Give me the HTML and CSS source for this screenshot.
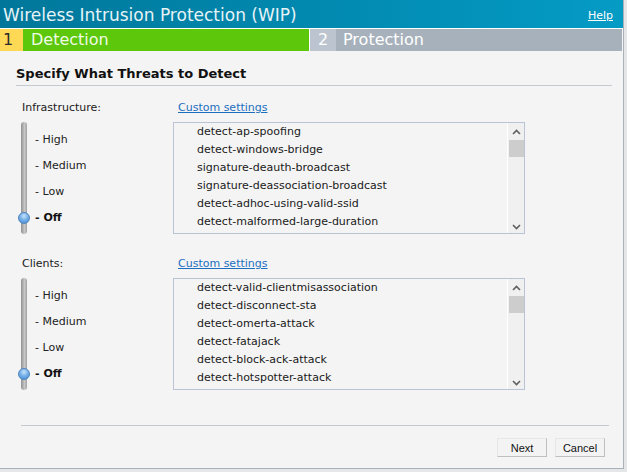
FILE: index.html
```html
<!DOCTYPE html>
<html>
<head>
<meta charset="utf-8">
<link rel="stylesheet" href="styles.css">
</head>
<body>
<div class="dialog">
  <div class="titlebar">
    <span class="title">Wireless Intrusion Protection (WIP)</span>
    <a class="help" href="#">Help</a>
  </div>
  <div class="steps">
    <div class="num num-active">1</div>
    <div class="step step-active">Detection</div>
    <div class="num num-next">2</div>
    <div class="step step-next">Protection</div>
  </div>
  <div class="content">
    <h1 class="heading">Specify What Threats to Detect</h1>

    <div class="section">
      <div class="sec-label">Infrastructure:</div>
      <a class="custom" href="#">Custom settings</a>
      <div class="slider">
        <div class="track"><div class="knob"></div></div>
        <div class="levels">
          <div>- High</div>
          <div>- Medium</div>
          <div>- Low</div>
          <div class="sel">- Off</div>
        </div>
      </div>
      <div class="listbox">
        <div class="items">
          <div class="item">detect-ap-spoofing</div>
          <div class="item">detect-windows-bridge</div>
          <div class="item">signature-deauth-broadcast</div>
          <div class="item">signature-deassociation-broadcast</div>
          <div class="item">detect-adhoc-using-valid-ssid</div>
          <div class="item">detect-malformed-large-duration</div>
        </div>
        <div class="scrollbar">
          <svg class="arrow up" width="9" height="6" viewBox="0 0 9 6"><path d="M1 5 L4.5 1.5 L8 5" fill="none" stroke="#5f5f5f" stroke-width="1.6"/></svg>
          <div class="thumb"></div>
          <svg class="arrow down" width="9" height="6" viewBox="0 0 9 6"><path d="M1 1 L4.5 4.5 L8 1" fill="none" stroke="#5f5f5f" stroke-width="1.6"/></svg>
        </div>
      </div>
    </div>

    <div class="section section2">
      <div class="sec-label">Clients:</div>
      <a class="custom" href="#">Custom settings</a>
      <div class="slider">
        <div class="track"><div class="knob"></div></div>
        <div class="levels">
          <div>- High</div>
          <div>- Medium</div>
          <div>- Low</div>
          <div class="sel">- Off</div>
        </div>
      </div>
      <div class="listbox">
        <div class="items">
          <div class="item">detect-valid-clientmisassociation</div>
          <div class="item">detect-disconnect-sta</div>
          <div class="item">detect-omerta-attack</div>
          <div class="item">detect-fatajack</div>
          <div class="item">detect-block-ack-attack</div>
          <div class="item">detect-hotspotter-attack</div>
        </div>
        <div class="scrollbar">
          <svg class="arrow up" width="9" height="6" viewBox="0 0 9 6"><path d="M1 5 L4.5 1.5 L8 5" fill="none" stroke="#5f5f5f" stroke-width="1.6"/></svg>
          <div class="thumb"></div>
          <svg class="arrow down" width="9" height="6" viewBox="0 0 9 6"><path d="M1 1 L4.5 4.5 L8 1" fill="none" stroke="#5f5f5f" stroke-width="1.6"/></svg>
        </div>
      </div>
    </div>

    <div class="footer">
      <button class="btn">Next</button>
      <button class="btn">Cancel</button>
    </div>
  </div>
</div>
</body>
</html>
```

FILE: styles.css
```css
html, body {
  margin: 0;
  padding: 0;
}
body {
  background: #e4e6e8;
  font-family: "DejaVu Sans", Verdana, sans-serif;
  width: 627px;
  height: 472px;
  overflow: hidden;
}
.dialog {
  width: 623px;
  height: 468px;
  background: #f4f4f4;
  border-right: 1px solid #aab1b8;
  border-bottom: 1px solid #aab1b8;
  display: flex;
  flex-direction: column;
}
.titlebar {
  height: 28px;
  border-bottom: 1px solid #ffffff;
  background: linear-gradient(to right, #00779a, #049bc5);
  display: flex;
  justify-content: space-between;
  align-items: center;
}
.title {
  color: #e6f3f7;
  font-size: 17px;
  padding-left: 3px;
  margin-top: 1px;
}
.help {
  color: #ffffff;
  font-size: 11px;
  padding-right: 10px;
  margin-top: 2px;
}
.steps {
  height: 22px;
  display: flex;
  font-size: 16px;
  line-height: 22px;
}
.num {
  text-align: center;
}
.num-active {
  width: 23px;
  background: #ffd956;
  color: #2a2a2a;
  text-align: left;
  box-sizing: border-box;
  padding-left: 3px;
}
.step-active {
  width: 286px;
  background: #5cc70b;
  color: #effbe4;
  padding-left: 8px;
  box-sizing: border-box;
}
.num-next {
  width: 27px;
  background: #bcc5cf;
  color: #ffffff;
  border-left: 1px solid #ffffff;
  box-sizing: border-box;
}
.step-next {
  width: 286px;
  background: #a7b1bb;
  color: #ffffff;
  padding-left: 7px;
  box-sizing: border-box;
}
.content {
  flex: 1;
  display: flex;
  flex-direction: column;
  padding: 0 11px 0 16px;
}
.heading {
  margin: 14px 0 0 0;
  font-size: 13px;
  font-weight: bold;
  line-height: 17px;
  padding-bottom: 3px;
  border-bottom: 1px solid #c3cad2;
  color: #111111;
}
.section {
  display: grid;
  grid-template-columns: 151px 352px;
  grid-template-rows: 14px 112px;
  row-gap: 7px;
  margin-top: 15px;
  padding-left: 6px;
  font-size: 11px;
  color: #1a1a1a;
}
.section2 {
  margin-top: 23px;
}
.sec-label {
  line-height: 14px;
}
.custom {
  line-height: 14px;
  color: #1c6fbf;
  margin-left: 5px;
}
.slider {
  display: flex;
  margin-left: -1px;
}
.track {
  position: relative;
  width: 6px;
  height: 112px;
  border-radius: 3px;
  background: linear-gradient(to right, #909090, #c8c8c8 60%, #a0a0a0);
}
.knob {
  position: absolute;
  left: -3px;
  top: 90px;
  width: 12px;
  height: 12px;
  border-radius: 50%;
  box-sizing: border-box;
  border: 1px solid #4f86c0;
  background: radial-gradient(circle at 50% 30%, #c8e2fb 0%, #78b2e8 45%, #3f86d0 100%);
}
.levels {
  margin-left: 8px;
  padding-top: 11px;
  display: flex;
  flex-direction: column;
  gap: 12px;
  line-height: 14px;
  color: #222222;
}
.levels .sel {
  font-weight: bold;
  color: #111111;
}
.listbox {
  box-sizing: border-box;
  width: 352px;
  height: 112px;
  border: 1px solid #b8c4d3;
  display: flex;
  background: #f4f4f4;
}
.items {
  flex: 1;
  padding-left: 23px;
}
.item {
  height: 18px;
  line-height: 18px;
  color: #1a1a1a;
  white-space: nowrap;
}
.scrollbar {
  width: 16px;
  border-left: 1px solid #ffffff;
  background: #f0f0f0;
  display: flex;
  flex-direction: column;
  align-items: center;
}
.arrow {
  display: block;
}
.arrow.up {
  margin-top: 6px;
}
.thumb {
  width: 15px;
  height: 17px;
  margin-top: 5px;
  background: #cdcdcd;
}
.arrow.down {
  margin-top: auto;
  margin-bottom: 3px;
}
.footer {
  margin-top: auto;
  margin-left: 5px;
  margin-right: 3px;
  border-top: 1px solid #c3cad2;
  padding-top: 12px;
  padding-bottom: 11px;
  display: flex;
  justify-content: flex-end;
  gap: 8px;
  padding-right: 4px;
}
.btn {
  width: 50px;
  height: 19px;
  box-sizing: border-box;
  padding: 0;
  background: #f3f3f3;
  border: 1px solid;
  border-color: #e6e6e6 #bfbfbf #bfbfbf #e6e6e6;
  font-family: "Liberation Sans", Arial, sans-serif;
  font-size: 11px;
  color: #111111;
}
```
